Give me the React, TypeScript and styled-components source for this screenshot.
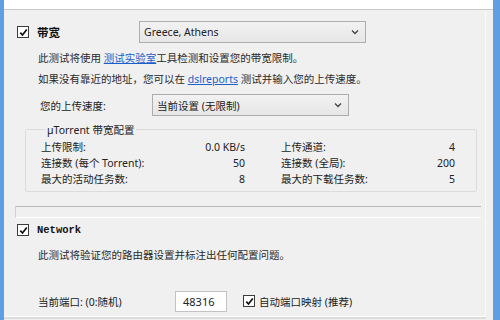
import * as React from "react";
import styled, { createGlobalStyle } from "styled-components";

const GlobalStyle = createGlobalStyle`
  html, body {
    margin: 0;
    padding: 0;
    background: #f0f0f0;
  }
  body {
    font-family: "Noto Sans", "Noto Sans CJK SC", sans-serif;
    font-size: 10.5px;
    color: #222;
  }
`;

const Frame = styled.div`
  width: 500px;
  height: 320px;
  display: flex;
  overflow: hidden;
`;

const Strip = styled.div<{ $w: number }>`
  width: ${p => p.$w}px;
  flex: none;
  background: #5f9ee2;
`;

const Window = styled.div`
  flex: 1;
  display: flex;
  flex-direction: column;
  background: #f0f0f0;
`;

const TopBar = styled.div`
  height: 9px;
  flex: none;
  background: #fff;
  border-bottom: 1px solid #c9c9c9;
`;

const Body = styled.div`
  flex: 1;
  display: flex;
  flex-direction: column;
  padding-left: 11px;
  margin-right: 7px;
  border-right: 1px solid #fafafa;
  border-bottom: 1px solid #fdfdfd;
  box-shadow: 0 2px 0 #dcdcdc;
  margin-bottom: 3px;
`;

const Section = styled.div`
  padding-left: 2px;
`;

const HeaderRow = styled.div<{ $top: number; $h?: number }>`
  display: flex;
  align-items: center;
  height: ${p => p.$h ?? 22}px;
  margin-top: ${p => p.$top}px;
`;

const CheckBox = styled.span`
  width: 10px;
  height: 10px;
  flex: none;
  border: 1px solid #3c3c3c;
  background: #fff;
  display: inline-flex;
  align-items: center;
  justify-content: center;
`;

const Check = () => (
  <CheckBox>
    <svg width="9" height="9" viewBox="0 0 9 9">
      <path d="M1.3 4.6 L3.5 7 L7.8 1.4" fill="none" stroke="#111" strokeWidth="1.7" />
    </svg>
  </CheckBox>
);

const Title = styled.span<{ $mono?: boolean }>`
  margin-left: 8px;
  font-weight: bold;
  font-size: ${p => (p.$mono ? "10.5px" : "11.5px")};
  font-family: ${p =>
    p.$mono ? '"Liberation Mono", monospace' : '"Noto Sans CJK SC", sans-serif'};
  color: #111;
`;

const Select = styled.div<{ $left: number; $w: number }>`
  margin-left: ${p => p.$left}px;
  width: ${p => p.$w}px;
  height: 22px;
  box-sizing: border-box;
  border: 1px solid #adadad;
  background: linear-gradient(#f2f2f2, #e6e6e6);
  display: flex;
  align-items: center;
  justify-content: space-between;
  padding: 0 6px 0 4px;
  color: #222;
`;

const Chevron = () => (
  <svg width="8" height="6" viewBox="0 0 8 6">
    <path d="M1 1.5 L4 4.5 L7 1.5" fill="none" stroke="#444" strokeWidth="1.3" />
  </svg>
);

const Desc = styled.div<{ $top: number }>`
  margin-top: ${p => p.$top}px;
  padding-left: 21px;
  line-height: 21px;
  color: #2a2a2a;
`;

const Link = styled.span`
  color: #1b5fc9;
  text-decoration: underline;
`;

const FieldRow = styled.div<{ $top: number; $indent?: number }>`
  display: flex;
  align-items: center;
  height: 22px;
  margin-top: ${p => p.$top}px;
  padding-left: ${p => p.$indent ?? 21}px;
`;

const FieldLabel = styled.span<{ $w: number }>`
  width: ${p => p.$w}px;
  flex: none;
`;

const Group = styled.fieldset`
  margin: 6px 0 0 8px;
  width: 452px;
  box-sizing: border-box;
  border: 1px solid #dcdcdc;
  border-radius: 2px;
  padding: 2px 0 4px 15px;
`;

const Legend = styled.legend`
  padding: 0 2px;
  margin-left: 4px;
  color: #222;
`;

const StatGrid = styled.div`
  display: grid;
  grid-template-columns: 204px 174px;
  column-gap: 36px;
`;

const Stat = styled.div`
  display: flex;
  justify-content: space-between;
  line-height: 16px;
`;

const Progress = styled.div`
  margin-top: 14px;
  width: 466px;
  height: 12px;
  flex: none;
  box-sizing: border-box;
  border-top: 1px solid #b8b8b8;
  border-left: 1px solid #d0d0d0;
  border-bottom: 1px solid #fff;
  background: #f0f0f0;
`;

const Input = styled.div`
  width: 52px;
  height: 21px;
  box-sizing: border-box;
  border: 1px solid #c2c2c2;
  background: #fff;
  display: flex;
  align-items: center;
  padding-left: 7px;
  color: #222;
  font-size: 11px;
`;

const Inline = styled.span`
  display: inline-flex;
  align-items: center;
  gap: 4px;
  margin-left: 16px;
`;

const stats: [string, string][] = [
  ["上传限制:", "0.0 KB/s"],
  ["上传通道:", "4"],
  ["连接数 (每个 Torrent):", "50"],
  ["连接数 (全局):", "200"],
  ["最大的活动任务数:", "8"],
  ["最大的下载任务数:", "5"],
];

export default function App() {
  return (
    <>
      <GlobalStyle />
      <Frame>
        <Strip $w={4} />
        <Window>
          <TopBar />
          <Body>
            <Section>
              <HeaderRow $top={11}>
                <Check />
                <Title>带宽</Title>
                <Select $left={79} $w={227}>
                  <span>Greece, Athens</span>
                  <Chevron />
                </Select>
              </HeaderRow>
              <Desc $top={5}>
                此测试将使用 <Link>测试实验室</Link>工具检测和设置您的带宽限制。
                <br />
                如果没有靠近的地址，您可以在 <Link>dslreports</Link> 测试并输入您的上传速度。
              </Desc>
              <FieldRow $top={4} $indent={23}>
                <FieldLabel $w={112}>您的上传速度:</FieldLabel>
                <Select $left={0} $w={197}>
                  <span>当前设置 (无限制)</span>
                  <Chevron />
                </Select>
              </FieldRow>
              <Group>
                <Legend>µTorrent 带宽配置</Legend>
                <StatGrid>
                  {stats.map(([label, value]) => (
                    <Stat key={label}>
                      <span>{label}</span>
                      <span>{value}</span>
                    </Stat>
                  ))}
                </StatGrid>
              </Group>
            </Section>
            <Progress />
            <Section>
              <HeaderRow $top={2} $h={20}>
                <Check />
                <Title $mono>Network</Title>
              </HeaderRow>
              <Desc $top={5}>此测试将验证您的路由器设置并标注出任何配置问题。</Desc>
              <FieldRow $top={24}>
                <FieldLabel $w={137}>当前端口: (0:随机)</FieldLabel>
                <Input>48316</Input>
                <Inline>
                  <Check />
                  自动端口映射 (推荐)
                </Inline>
              </FieldRow>
            </Section>
          </Body>
        </Window>
        <Strip $w={7} />
      </Frame>
    </>
  );
}
